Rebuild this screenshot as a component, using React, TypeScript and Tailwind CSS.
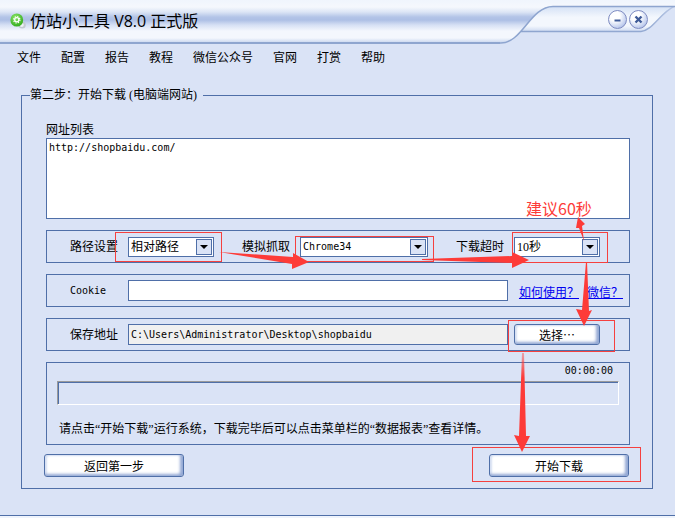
import { useState } from "react";
import type { ReactNode } from "react";

const MENU = ["文件", "配置", "报告", "教程", "微信公众号", "官网", "打赏", "帮助"];

function TitleBackground() {
  return (
    <div className="absolute inset-0 flex">
      <div className="flex-1 border-b-2 border-[#8ea5cf] bg-[linear-gradient(to_bottom,#f0f5fd_0px,#f5f8fd_7px,#dce5f5_12px,#b3c4e7_17px,#adbfe5_20px,#d6e0f4_25px,#f4f7fd_31px,#f4f7fd_38px,#cfdbf1_42px)]" />
      <svg width="175" height="44" viewBox="0 0 175 44" aria-hidden="true">
        <defs>
          <linearGradient id="bar" gradientUnits="userSpaceOnUse" x1="0" y1="0" x2="0" y2="42">
            <stop offset="0" stopColor="#f0f5fd" />
            <stop offset="0.17" stopColor="#f5f8fd" />
            <stop offset="0.29" stopColor="#dce5f5" />
            <stop offset="0.4" stopColor="#b3c4e7" />
            <stop offset="0.48" stopColor="#adbfe5" />
            <stop offset="0.6" stopColor="#d6e0f4" />
            <stop offset="0.74" stopColor="#f4f7fd" />
            <stop offset="0.9" stopColor="#f4f7fd" />
            <stop offset="1" stopColor="#cfdbf1" />
          </linearGradient>
          <linearGradient id="tab" x1="0" y1="0" x2="0" y2="1">
            <stop offset="0" stopColor="#d3e0f5" />
            <stop offset="0.45" stopColor="#f3f7fd" />
            <stop offset="0.8" stopColor="#f3f7fd" />
            <stop offset="1" stopColor="#d0dcf2" />
          </linearGradient>
          <linearGradient id="edge" x1="0" y1="0" x2="1" y2="0">
            <stop offset="0" stopColor="#8ea5cf" />
            <stop offset="0.8" stopColor="#93a9d2" />
            <stop offset="1" stopColor="#b9c8e6" />
          </linearGradient>
        </defs>
        <path d="M22 31 H141 C152 31 160 13 175 6 H40 Z" fill="url(#tab)" />
        <path d="M21 31.5 H141 C152 31 160 13 175 6" fill="none" stroke="url(#edge)" strokeWidth="1.5" />
        <path d="M0 43 C22 44 30 6 53 6 H175 V0 H0 Z" fill="url(#bar)" />
        <path d="M0 43 C22 44 30 6.5 53 6.5 H175" fill="none" stroke="#8ea5cf" strokeWidth="1.5" />
      </svg>
    </div>
  );
}

function AppIcon() {
  return (
    <svg width="16" height="16" viewBox="0 0 16 16" aria-hidden="true">
      <defs>
        <radialGradient id="green" cx="0.4" cy="0.3" r="0.7">
          <stop offset="0" stopColor="#8be566" />
          <stop offset="1" stopColor="#35ad20" />
        </radialGradient>
      </defs>
      <circle cx="12.2" cy="12" r="3.6" fill="#c3c9d2" />
      <circle cx="11.8" cy="12" r="2" fill="#eef1f5" />
      <ellipse cx="6.8" cy="7" rx="6.4" ry="6.6" fill="url(#green)" />
      <circle cx="6.8" cy="6.8" r="2.1" fill="none" stroke="#fff" strokeWidth="1.3" />
      <circle cx="6.8" cy="6.8" r="3.2" fill="none" stroke="#fff" strokeWidth="1.1" strokeDasharray="1.25 1.26" />
    </svg>
  );
}

function RoundButton({ label, children }: { label: string; children: ReactNode }) {
  return (
    <button
      aria-label={label}
      className="flex size-[19px] items-center justify-center rounded-full border border-[#7f8cc2] bg-[radial-gradient(circle_at_35%_30%,#ffffff_30%,#c3d0ef_70%,#8c9ed3_100%)]"
    >
      <svg width="9" height="9" viewBox="0 0 9 9" stroke="#3f5b98" strokeWidth="2" fill="none">
        {children}
      </svg>
    </button>
  );
}

function Row({ className, children }: { className: string; children: ReactNode }) {
  return (
    <div className={`flex h-[33px] items-center border border-[#4f6fa8] pl-[23px] ${className}`}>
      {children}
    </div>
  );
}

function SelectField({
  id,
  label,
  options,
  className = "",
  boxClass = "",
  textClass = "text-[12px]",
}: {
  id: string;
  label: string;
  options: string[];
  className?: string;
  boxClass?: string;
  textClass?: string;
}) {
  return (
    <div className={`flex items-center gap-2.5 ${className}`}>
      <label htmlFor={id}>{label}</label>
      <div className={`relative h-5 ${boxClass}`}>
        <select
          id={id}
          className={`block h-5 w-full appearance-none border border-[#4f6fa8] bg-white pl-0.5 outline-none ${textClass}`}
        >
          {options.map((o) => (
            <option key={o}>{o}</option>
          ))}
        </select>
        <span className="pointer-events-none absolute top-0.5 right-0.5 flex h-4 w-4 items-center justify-center border border-[#4f6fa8] bg-[#dae3f6]">
          <svg width="8" height="4" viewBox="0 0 8 4">
            <path d="M0 0 H8 L4 4 Z" fill="#000" />
          </svg>
        </span>
      </div>
    </div>
  );
}

function PushButton({ className, children }: { className: string; children: ReactNode }) {
  return (
    <button
      className={`rounded-[3px] border border-[#4f6fa8] bg-white font-['Noto_Sans_CJK_SC',sans-serif] shadow-[inset_-3px_-2px_3px_#93a8d4,inset_2px_1px_2px_#d5dff2] ${className}`}
    >
      {children}
    </button>
  );
}

// red boxes and arrows drawn over the form
function Annotations() {
  return (
    <div className="pointer-events-none absolute top-0 left-0">
      <svg width="675" height="518" viewBox="0 0 675 518" aria-hidden="true">
        <defs>
          <linearGradient id="fade" x1="0" y1="0" x2="0" y2="1">
            <stop offset="0" stopColor="#fd3b38" stopOpacity="0.4" />
            <stop offset="0.25" stopColor="#fd3b38" />
          </linearGradient>
        </defs>
        <g fill="none" stroke="#f5403f">
          <rect x="115.5" y="232.5" width="106" height="29" />
          <rect x="295.5" y="236.5" width="138" height="25" />
          <rect x="512.5" y="232.5" width="95" height="30" />
          <rect x="508.5" y="320.5" width="106" height="31" />
          <rect x="472.5" y="447.5" width="168" height="34" />
        </g>
        <g fill="#fd3b38">
          <path d="M219 252 L293 257 V253 L309 262 L292 269 V264 Z" />
          <path d="M422 259 L512 256 V252 L529 260 L512 268 V263 L422 260 Z" />
          <path d="M584 241 L579 228 L576 228 L578 217 L585 224 L582 226 Z" />
          <path d="M586 262 H587 L589 311 L592 310 L584 326 L576 309 L582 310 Z" />
          <path d="M522 353 H524 L526 436 L530 436 L522 452 L514 435 L519 436 Z" fill="url(#fade)" />
        </g>
      </svg>
      <span className="absolute top-[196px] left-[526px] font-['Noto_Sans_CJK_SC',sans-serif] text-[16px] leading-6 whitespace-nowrap text-[#fd3b38]">
        建议60秒
      </span>
    </div>
  );
}

export default function App() {
  const [urls, setUrls] = useState("http://shopbaidu.com/");
  const [cookie, setCookie] = useState("");

  return (
    <div
      lang="zh-CN"
      className="relative min-h-screen bg-[#dae3f6] font-['Liberation_Serif','Noto_Sans_CJK_SC',serif] text-[12px] leading-4 text-black"
    >
      <header className="relative h-11">
        <TitleBackground />
        <div className="relative flex items-start pr-[27px] pl-2.5">
          <div className="flex h-[42px] flex-1 items-center gap-1">
            <AppIcon />
            <h1 className="font-['Open_Sans','Noto_Sans_CJK_SC',sans-serif] text-[16px] leading-6">
              仿站小工具 V8.0 正式版
            </h1>
          </div>
          <div className="flex gap-0.5 pt-2.5">
            <RoundButton label="最小化">
              <path d="M1.5 5.5 H7.5" />
            </RoundButton>
            <RoundButton label="关闭">
              <path d="M1.5 1.5 L7.5 7.5 M7.5 1.5 L1.5 7.5" strokeWidth="2.4" />
            </RoundButton>
          </div>
        </div>
      </header>

      <nav className="flex h-[26px] items-center gap-5 pl-[17px] font-['Noto_Sans_CJK_SC',sans-serif]">
        {MENU.map((m) => (
          <button key={m}>{m}</button>
        ))}
      </nav>

      <main className="border-b border-[#4f6fa8] pt-[17px] pr-[22px] pb-[26px] pl-[21px]">
        <fieldset className="border border-[#4f6fa8]">
          <legend className="ml-2 pr-1.5">第二步：开始下载 (电脑端网站)</legend>

          <div className="flex flex-col gap-[11px] pt-[18px] pr-[22px] pl-6">
            <div>
              <label htmlFor="urls" className="block h-[17px] leading-[18px]">
                网址列表
              </label>
              <textarea
                id="urls"
                value={urls}
                onChange={(e) => setUrls(e.target.value)}
                spellCheck={false}
                className="block h-[81px] w-full resize-none border border-[#4f6fa8] bg-white px-0.5 font-['DejaVu_Sans_Mono',monospace] text-[10px] leading-[18px] outline-none"
              />
            </div>

            <Row className="gap-7 pr-[29px]">
              <SelectField id="path" label="路径设置" options={["相对路径", "绝对路径"]} boxClass="w-[86px]" />
              <SelectField
                id="agent"
                label="模拟抓取"
                options={["Chrome34"]}
                className="flex-1"
                boxClass="flex-1"
                textClass="font-['DejaVu_Sans_Mono',monospace] text-[10px]"
              />
              <SelectField id="timeout" label="下载超时" options={["10秒", "30秒", "60秒"]} boxClass="w-[86px]" />
            </Row>

            <Row className="pr-1.5">
              <label htmlFor="cookie" className="w-[58px] font-['DejaVu_Sans_Mono',monospace] text-[10px]">
                Cookie
              </label>
              <input
                id="cookie"
                value={cookie}
                onChange={(e) => setCookie(e.target.value)}
                className="h-[21px] min-w-0 flex-1 border border-[#4f6fa8] bg-white px-0.5 outline-none"
              />
              <div className="ml-[11px] flex gap-2 pt-1 text-[#0000f0] underline">
                <a href="#usage">如何使用？</a>
                <a href="#wechat">微信？</a>
              </div>
            </Row>

            <Row className="pr-[29px]">
              <label htmlFor="dir" className="w-[58px]">
                保存地址
              </label>
              <input
                id="dir"
                readOnly
                value="C:\Users\Administrator\Desktop\shopbaidu"
                className="h-[21px] min-w-0 flex-1 border border-[#4f6fa8] bg-[#f0f0f0] px-0.5 font-['DejaVu_Sans_Mono',monospace] text-[10px] outline-none"
              />
              <PushButton className="ml-1.5 h-[21px] w-[86px]">选择…</PushButton>
            </Row>

            <div className="h-[83px] border border-[#4f6fa8] px-2.5">
              <div className="h-[18px] pr-1.5 text-right font-['DejaVu_Sans_Mono',monospace] text-[10px]">
                00:00:00
              </div>
              <div className="h-6 border border-t-[#9a9a9a] border-r-white border-b-white border-l-[#9a9a9a]">
                <div className="h-full border-t border-l border-[#4f6fa8]" />
              </div>
              <p className="mt-4 pl-0.5">
                请点击“开始下载”运行系统，下载完毕后可以点击菜单栏的“数据报表”查看详情。
              </p>
            </div>
          </div>

          <div className="flex justify-between pt-[9px] pr-[23px] pb-[11px] pl-[22px]">
            <PushButton className="h-[23px] w-[140px]">返回第一步</PushButton>
            <PushButton className="h-[23px] w-[140px]">开始下载</PushButton>
          </div>
        </fieldset>
      </main>
      <div className="h-0.5 bg-[#eff4fc]" />

      <Annotations />
    </div>
  );
}
